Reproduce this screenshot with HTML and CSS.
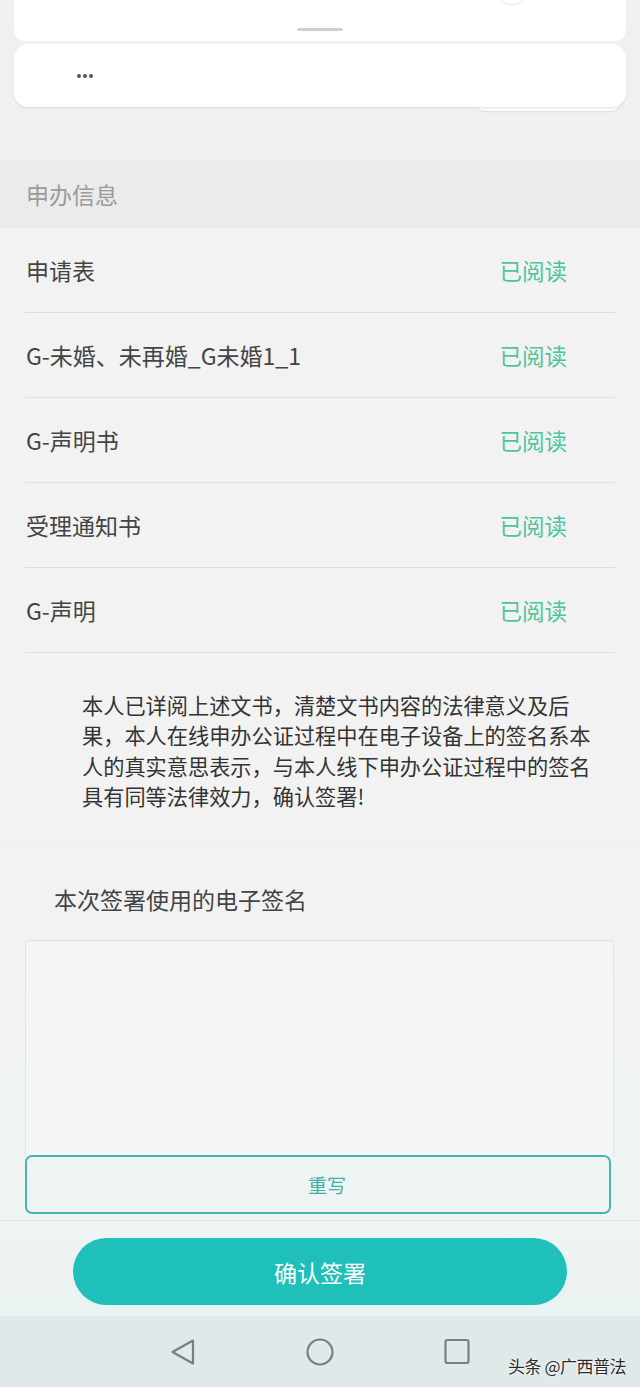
FILE: index.html
```html
<!DOCTYPE html>
<html lang="zh-CN">
<head>
<meta charset="utf-8">
<title>确认签署</title>
<link rel="stylesheet" href="styles.css">
</head>
<body>
<div class="screen">
  <header class="top">
    <div class="sheet">
      <span class="sheet-knob"></span>
      <span class="handle"></span>
    </div>
    <div class="menu-card">
      <span class="more"><i></i><i></i><i></i></span>
    </div>
    <div class="menu-ghost"></div>
  </header>

  <div class="section-title">申办信息</div>

  <ul class="doc-list">
    <li class="doc-row"><span class="doc-name">申请表</span><span class="doc-state">已阅读</span></li>
    <li class="doc-row"><span class="doc-name">G-未婚、未再婚_G未婚1_1</span><span class="doc-state">已阅读</span></li>
    <li class="doc-row"><span class="doc-name">G-声明书</span><span class="doc-state">已阅读</span></li>
    <li class="doc-row"><span class="doc-name">受理通知书</span><span class="doc-state">已阅读</span></li>
    <li class="doc-row"><span class="doc-name">G-声明</span><span class="doc-state">已阅读</span></li>
  </ul>

  <section class="statement">
    <p>本人已详阅上述文书，清楚文书内容的法律意义及后果，本人在线申办公证过程中在电子设备上的签名系本人的真实意思表示，与本人线下申办公证过程中的签名具有同等法律效力，确认签署!</p>
  </section>

  <section class="sign-section">
    <div class="sign-label">本次签署使用的电子签名</div>
    <div class="sign-pad"></div>
    <button class="rewrite">重写</button>
  </section>

  <footer class="footer">
    <button class="confirm">确认签署</button>
  </footer>

  <nav class="navbar">
    <svg class="nav-icon" width="30" height="30" viewBox="0 0 30 30"><path d="M25 3.5 L4.5 15 L25 26.5 Z" fill="none" stroke="#7a7f80" stroke-width="2.2" stroke-linejoin="round"/></svg>
    <svg class="nav-icon" width="30" height="30" viewBox="0 0 30 30"><circle cx="15" cy="15" r="12.5" fill="none" stroke="#7a7f80" stroke-width="2.2"/></svg>
    <svg class="nav-icon" width="30" height="30" viewBox="0 0 30 30"><rect x="3.5" y="3" width="23" height="23" rx="2" fill="none" stroke="#7a7f80" stroke-width="2.2"/></svg>
  </nav>

  <div class="watermark">头条 @广西普法</div>
</div>
</body>
</html>
```

FILE: styles.css
```css
* { box-sizing: border-box; }

html, body {
  margin: 0;
  padding: 0;
}

body {
  font-family: "Noto Sans CJK SC", "Noto Sans", Roboto, sans-serif;
  background: #f1f1f1;
}

.screen {
  position: relative;
  width: 640px;
  height: 1387px;
  overflow: hidden;
  display: flex;
  flex-direction: column;
  background: linear-gradient(#f1f1f1 0, #f2f2f2 900px, #eef3f3 1220px, #e8f1f1 1387px);
}

/* top sheet */
.top {
  height: 160px;
  padding: 0 14px;
  display: flex;
  flex-direction: column;
  background: #f0f0f0;
}

.sheet {
  position: relative;
  height: 41px;
  background: #fff;
  border-radius: 0 0 12px 12px;
  display: flex;
  justify-content: center;
  align-items: flex-start;
}

.sheet-knob {
  position: absolute;
  left: 486px;
  top: -16px;
  width: 24px;
  height: 20px;
  border-radius: 50%;
  background: #fff;
  box-shadow: 0 1px 2px rgba(0,0,0,0.12);
}

.handle {
  margin-top: 28px;
  width: 46px;
  height: 3px;
  border-radius: 2px;
  background: #cfcfcf;
}

.menu-card {
  margin-top: 3px;
  height: 63px;
  background: #fff;
  border-radius: 14px;
  box-shadow: 0 1px 2px rgba(0,0,0,0.10);
  display: flex;
  align-items: center;
  padding-left: 63px;
  position: relative;
  z-index: 1;
}

.more {
  display: flex;
  gap: 2px;
}

.more i {
  width: 4px;
  height: 4px;
  border-radius: 50%;
  background: #555;
}

.menu-ghost {
  margin-top: -8px;
  margin-left: 460px;
  width: 148px;
  height: 12px;
  background: #fbfbfb;
  border-radius: 0 0 12px 12px;
  box-shadow: 0 1px 2px rgba(0,0,0,0.08);
}

/* section title */
.section-title {
  height: 68px;
  padding-left: 26px;
  display: flex;
  align-items: center;
  background: #ebebeb;
  color: #9a9a9a;
  font-size: 23px;
}

/* document list */
.doc-list {
  list-style: none;
  margin: 0;
  padding: 0 25px;
  background: #f2f2f2;
}

.doc-row {
  height: 85px;
  border-bottom: 1px solid #dedede;
  display: flex;
  align-items: center;
  justify-content: space-between;
  padding: 0 48px 0 1px;
}

.doc-name {
  font-size: 23px;
  color: #444;
}

.doc-state {
  font-size: 22.5px;
  color: #4cc59b;
}

/* statement */
.statement {
  height: 194px;
  padding: 37px 0 0 82px;
  background: #f2f2f2;
  border-bottom: 1px solid #ececec;
}

.statement p {
  margin: 0;
  width: 515px;
  font-size: 21.2px;
  line-height: 30.3px;
  color: #333;
}

/* signature */
.sign-section {
  height: 374px;
  padding: 37px 25px 0 25px;
  border-bottom: 1px solid #e3e6e6;
  display: flex;
  flex-direction: column;
}

.sign-label {
  padding-left: 29px;
  height: 30px;
  line-height: 30px;
  font-size: 23px;
  color: #444;
}

.sign-pad {
  margin-top: 26px;
  width: 589px;
  height: 216px;
  border: 1px solid #e2e2e2;
  border-bottom: none;
  border-radius: 4px 4px 0 0;
  background: #f4f5f5;
}

.rewrite {
  margin-top: -1px;
  width: 586px;
  height: 59px;
  border: 2px solid #45b7ae;
  border-radius: 7px;
  background: #eef4f4;
  color: #3cb1a9;
  font-family: inherit;
  font-size: 19px;
  padding: 0 0 0 18px;
}

/* footer */
.footer {
  height: 95px;
  padding: 17px 0 0 73px;
}

.confirm {
  width: 494px;
  height: 67px;
  border: none;
  border-radius: 34px;
  background: #1fc0b9;
  color: #fff;
  font-family: inherit;
  font-size: 23px;
  padding: 0;
}

/* nav bar */
.navbar {
  flex: 1;
  background: #dfe9e9;
  display: flex;
  align-items: center;
  padding: 0 0 0 168px;
  gap: 107px;
}

.nav-icon {
  display: block;
}

.watermark {
  position: absolute;
  right: 14px;
  bottom: 9px;
  font-size: 17px;
  color: #2b2b2b;
  text-shadow: 0 0 2px #fff, 0 0 2px #fff;
  letter-spacing: -0.5px;
}
```
